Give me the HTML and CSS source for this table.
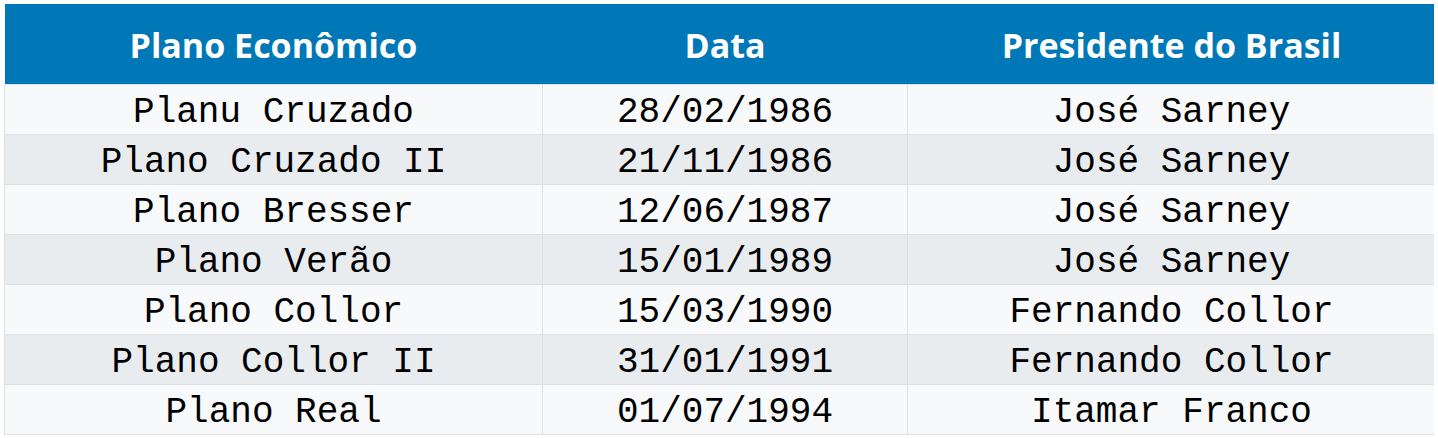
FILE: index.html
```html
<!DOCTYPE html>
<html lang="pt">
<head>
<meta charset="utf-8">
<link rel="stylesheet" href="styles.css">
</head>
<body>
<table class="plans">
  <colgroup>
    <col class="c1"><col class="c2"><col class="c3">
  </colgroup>
  <thead>
    <tr><th>Plano Econômico</th><th>Data</th><th>Presidente do Brasil</th></tr>
  </thead>
  <tbody>
    <tr><td>Planu Cruzado</td><td>28/02/1986</td><td>José Sarney</td></tr>
    <tr><td>Plano Cruzado II</td><td>21/11/1986</td><td>José Sarney</td></tr>
    <tr><td>Plano Bresser</td><td>12/06/1987</td><td>José Sarney</td></tr>
    <tr><td>Plano Verão</td><td>15/01/1989</td><td>José Sarney</td></tr>
    <tr><td>Plano Collor</td><td>15/03/1990</td><td>Fernando Collor</td></tr>
    <tr><td>Plano Collor II</td><td>31/01/1991</td><td>Fernando Collor</td></tr>
    <tr><td>Plano Real</td><td>01/07/1994</td><td>Itamar Franco</td></tr>
  </tbody>
</table>
</body>
</html>
```
FILE: styles.css
```css
html, body { background: #ffffff; }
body { margin: 4px; }
.plans {
  border-collapse: collapse;
  table-layout: fixed;
  width: 1431px;
}
.c1 { width: 538px; }
.c2 { width: 365px; }
.c3 { width: 528px; }
.plans th {
  background: #0077b6;
  color: #ffffff;
  font-family: "Open Sans", sans-serif;
  font-weight: 700;
  font-size: 34px;
  height: 78px;
  padding: 2px 0 0;
  text-align: center;
  vertical-align: middle;
  letter-spacing: 0;
}
.plans td {
  font-family: "Courier New", "Liberation Mono", monospace;
  font-size: 36px;
  line-height: 40px;
  color: #000000;
  height: 43px;
  padding: 6px 0 0;
  text-align: center;
  vertical-align: middle;
  border: 1px solid #dee2e6;
}
.plans tbody tr:nth-child(odd) td { background: #f8f9fa; }
.plans tbody tr:nth-child(even) td { background: #e9ecef; }
```
